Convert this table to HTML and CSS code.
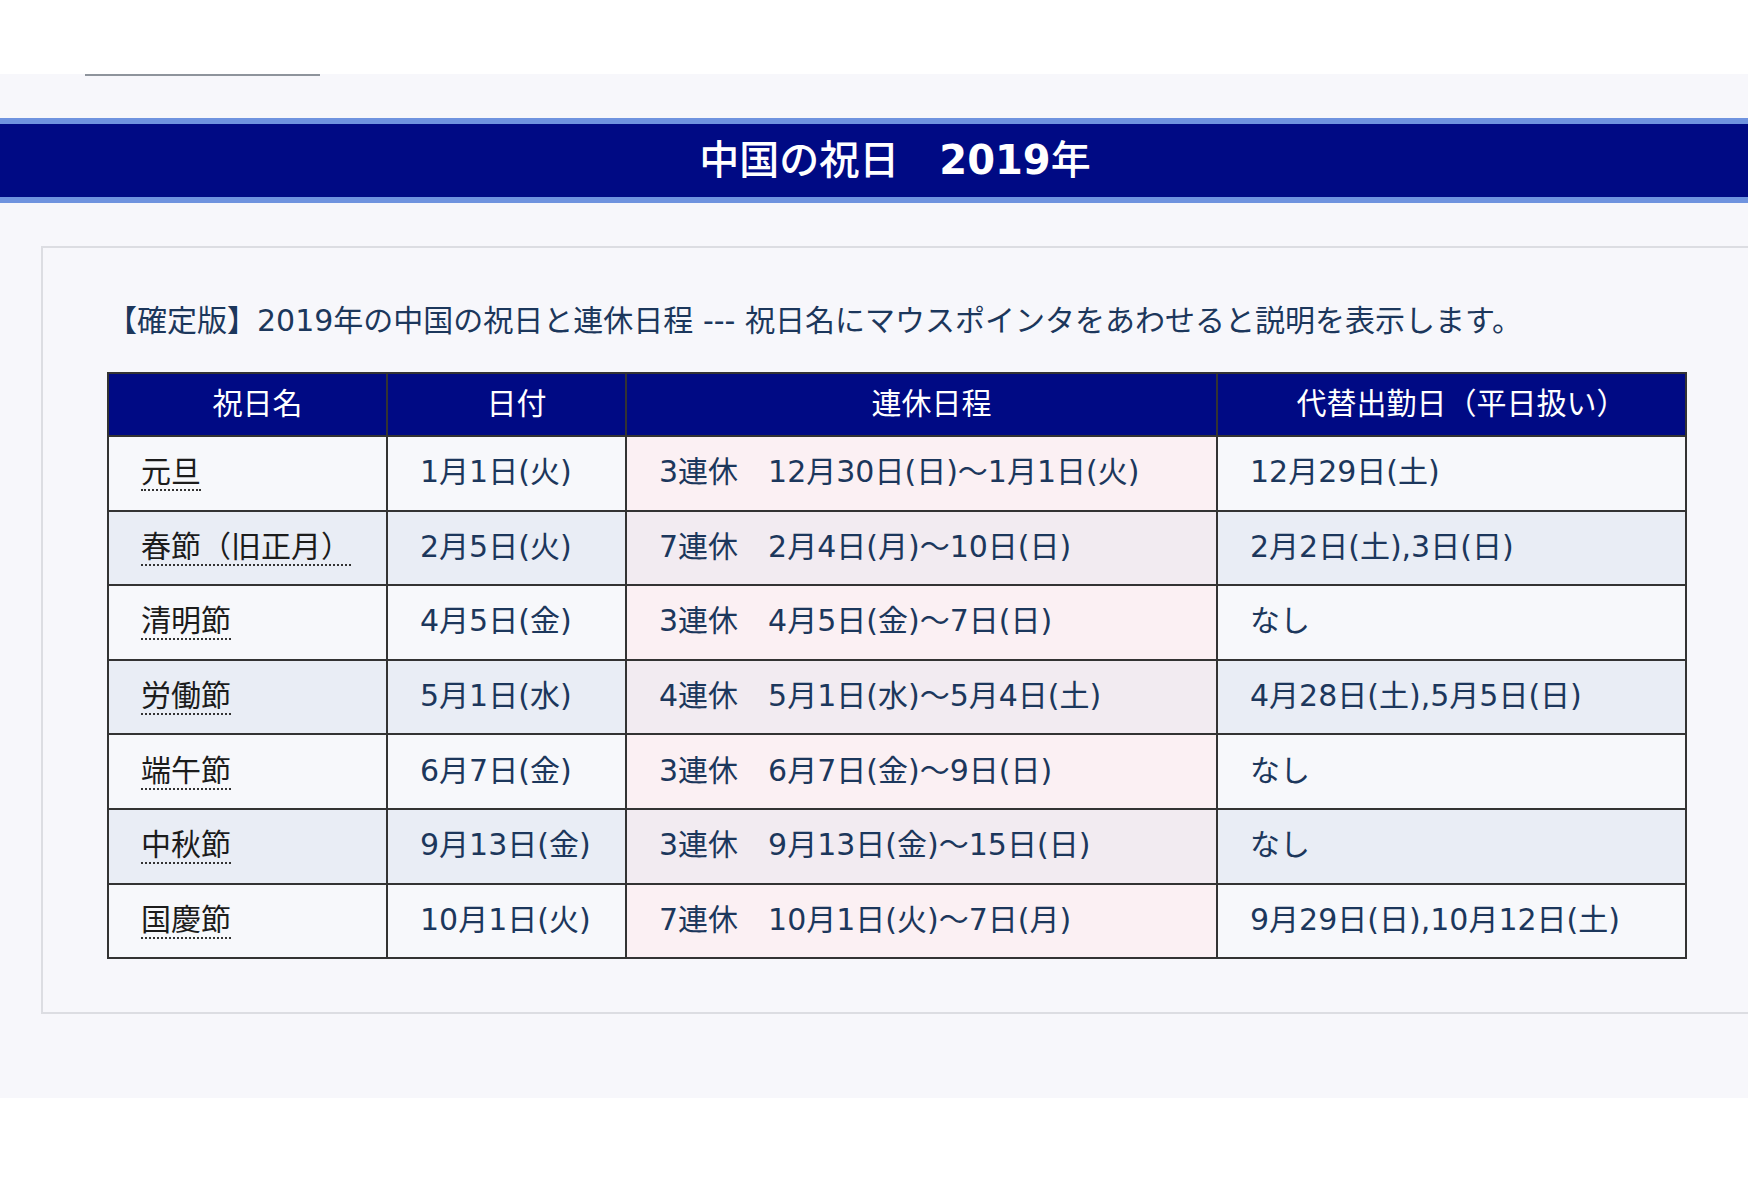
FILE: index.html
```html
<!DOCTYPE html>
<html lang="ja">
<head>
<meta charset="utf-8">
<title>中国の祝日 2019年</title>
<link rel="stylesheet" href="styles.css">
</head>
<body>
<div class="top"></div>
<main class="page">
  <div class="tabline"></div>
  <div class="banner">
    <h1 class="title">中国の祝日　<span class="year">2019</span>年</h1>
  </div>
  <section class="box">
    <p class="intro">【確定版】2019年の中国の祝日と連休日程 --- 祝日名にマウスポインタをあわせると説明を表示します。</p>
    <table class="holidays">
      <colgroup>
        <col class="c1"><col class="c2"><col class="c3"><col class="c4">
      </colgroup>
      <thead>
        <tr><th>祝日名</th><th>日付</th><th>連休日程</th><th>代替出勤日（平日扱い）</th></tr>
      </thead>
      <tbody>
        <tr class="odd"><td class="name"><span class="tip">元旦</span></td><td>1月1日(火)</td><td class="span">3連休　12月30日(日)〜1月1日(火)</td><td>12月29日(土)</td></tr>
        <tr class="even"><td class="name"><span class="tip">春節（旧正月）</span></td><td>2月5日(火)</td><td class="span">7連休　2月4日(月)〜10日(日)</td><td>2月2日(土),3日(日)</td></tr>
        <tr class="odd"><td class="name"><span class="tip">清明節</span></td><td>4月5日(金)</td><td class="span">3連休　4月5日(金)〜7日(日)</td><td>なし</td></tr>
        <tr class="even"><td class="name"><span class="tip">労働節</span></td><td>5月1日(水)</td><td class="span">4連休　5月1日(水)〜5月4日(土)</td><td>4月28日(土),5月5日(日)</td></tr>
        <tr class="odd"><td class="name"><span class="tip">端午節</span></td><td>6月7日(金)</td><td class="span">3連休　6月7日(金)〜9日(日)</td><td>なし</td></tr>
        <tr class="even"><td class="name"><span class="tip">中秋節</span></td><td>9月13日(金)</td><td class="span">3連休　9月13日(金)〜15日(日)</td><td>なし</td></tr>
        <tr class="odd"><td class="name"><span class="tip">国慶節</span></td><td>10月1日(火)</td><td class="span">7連休　10月1日(火)〜7日(月)</td><td>9月29日(日),10月12日(土)</td></tr>
      </tbody>
    </table>
  </section>
</main>
</body>
</html>
```

FILE: styles.css
```css
html, body {
  margin: 0;
  padding: 0;
  background: #ffffff;
  overflow-x: hidden;
}

body {
  font-family: "DejaVu Sans", "Noto Sans CJK JP", sans-serif;
  color: #1f3a60;
}

.top {
  height: 74px;
  background: #ffffff;
}

.page {
  background: #f7f7fb;
  padding-bottom: 84px;
  overflow: hidden;
}

.tabline {
  width: 235px;
  height: 2px;
  margin-left: 85px;
  background: #8e949c;
}

.banner {
  margin-top: 42px;
  background: #000a84;
  border-top: 6px solid #6f93df;
  border-bottom: 6px solid #6f93df;
  height: 73px;
}

.title {
  margin: 0;
  padding-left: 42px;
  text-align: center;
  color: #ffffff;
  font-size: 40px;
  line-height: 73px;
  font-weight: 500;
  font-family: "DejaVu Sans", "Noto Sans CJK JP", sans-serif;
}

.year {
  font-weight: 700;
}

.box {
  margin: 43px -80px 0 41px;
  border: 2px solid #dcdde2;
  padding: 50px 0 53px 64px;
}

.intro {
  margin: 0 0 29px 0;
  font-size: 30px;
  line-height: 45px;
  color: #1c375c;
  white-space: nowrap;
}

.holidays {
  border-collapse: collapse;
  table-layout: fixed;
  width: 1578px;
  font-size: 30px;
}

.c1 { width: 279px; }
.c2 { width: 239px; }
.c3 { width: 591px; }
.c4 { width: 469px; }

.holidays th,
.holidays td {
  border: 2px solid #333333;
  padding: 0 12px 8px 32px;
  white-space: nowrap;
}

.holidays th {
  background: #000a84;
  color: #ffffff;
  font-weight: 400;
  text-align: center;
  height: 53px;
}

.holidays td {
  text-align: left;
  height: 64.6px;
  color: #1c375c;
}

.odd td { background: #f7f8fb; }
.even td { background: #e9edf5; }
.odd td.span { background: #fbf0f3; }
.even td.span { background: #f2ebf1; }

.name .tip {
  color: #1c1c1c;
  border-bottom: 2px dotted #333333;
}
```
